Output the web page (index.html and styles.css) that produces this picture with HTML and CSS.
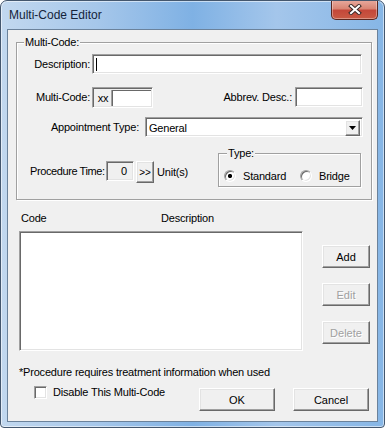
FILE: index.html
```html
<!DOCTYPE html>
<html lang="en">

<head>
    <meta charset="UTF-8">
    <meta name="viewport" content="width=device-width, initial-scale=1.0">
    <title>Multi-Code Editor</title>
    <link rel="stylesheet" href="styles.css">
</head>

<body>
    <div class="window">
        <div class="titlebar">
            <span class="title">Multi-Code Editor</span>
            <span class="close">
                <svg width="14" height="11" viewBox="0 0 14 11">
                    <path d="M3 2 L11 9 M11 2 L3 9" stroke="#3a2a28" stroke-width="4" stroke-linecap="square" />
                    <path d="M3 2 L11 9 M11 2 L3 9" stroke="#fff" stroke-width="2" stroke-linecap="square" />
                </svg>
            </span>
        </div>

        <div class="client">
            <div class="group main-group">
                <span class="legend">Multi-Code:</span>

                <div class="row row-desc">
                    <label class="lbl">Description:</label>
                    <div class="sunken edit-desc"><span class="caret"></span></div>
                </div>

                <div class="row row-code">
                    <label class="lbl">Multi-Code:</label>
                    <div class="sunken code-box">
                        <span class="prefix">xx</span>
                        <span class="code-input"></span>
                    </div>
                    <label class="lbl-abbrev">Abbrev. Desc.:</label>
                    <div class="sunken edit-abbrev"></div>
                </div>

                <div class="row row-appt">
                    <label class="lbl lbl-appt">Appointment Type:</label>
                    <div class="sunken combo">
                        <span class="combo-text">General</span>
                        <span class="raised combo-btn">
                            <svg width="7" height="4" viewBox="0 0 7 4"><path d="M0 0 H7 L3.5 4 Z" fill="#000" /></svg>
                        </span>
                    </div>
                </div>

                <div class="row row-time">
                    <label class="lbl-time">Procedure Time:</label>
                    <div class="sunken edit-time">0</div>
                    <button class="btn btn-more">&gt;&gt;</button>
                    <span class="units">Unit(s)</span>

                    <div class="group type-group">
                        <span class="legend">Type:</span>
                        <label class="radio radio-first"><span class="radio-dot checked"></span>Standard</label>
                        <label class="radio"><span class="radio-dot"></span>Bridge</label>
                    </div>
                </div>
            </div>

            <div class="list-head">
                <span class="col-code">Code</span>
                <span>Description</span>
            </div>

            <div class="list-area">
                <div class="sunken listbox"></div>
                <div class="list-buttons">
                    <button class="btn">Add</button>
                    <button class="btn disabled">Edit</button>
                    <button class="btn disabled">Delete</button>
                </div>
            </div>

            <div class="note">*Procedure requires treatment information when used</div>

            <div class="footer">
                <label class="check"><span class="check-box"></span>Disable This Multi-Code</label>
                <button class="btn btn-ok">OK</button>
                <button class="btn btn-cancel">Cancel</button>
            </div>
        </div>
    </div>
</body>

</html>
```

FILE: styles.css
```css
body {
    margin: 0;
    font-family: "Liberation Sans", Arial, sans-serif;
    font-size: 11px;
    letter-spacing: -0.2px;
    color: #000;
    background-color: #fff;
}

.window {
    width: 385px;
    height: 428px;
    box-sizing: border-box;
    border: 1px solid #44576e;
    border-radius: 7px 7px 4px 4px;
    background: linear-gradient(to right, #c2d8ef 0%, #a6c7ea 25%, #7fb1e4 50%, #a4c6eb 72%, #86b6e6 100%);
    box-shadow: inset 0 0 0 1px rgba(255, 255, 255, 0.55);
    overflow: hidden;
}

.titlebar {
    height: 28px;
    display: flex;
    align-items: flex-start;
}

.title {
    padding: 7px 0 0 8px;
    font-size: 12px;
    letter-spacing: 0;
    line-height: 14px;
    color: #14233a;
}

.close {
    margin: -1px 6px 0 auto;
    width: 47px;
    height: 20px;
    box-sizing: border-box;
    border: 1px solid #5a2720;
    border-top: none;
    border-radius: 0 0 5px 5px;
    background: linear-gradient(to bottom, #e8ab9f 0%, #d98574 45%, #c4483a 55%, #c95a44 100%);
    box-shadow: inset 0 0 0 1px rgba(255, 255, 255, 0.35);
    display: flex;
    justify-content: center;
    align-items: center;
}

.client {
    height: 393px;
    margin: 0 6px;
    box-sizing: border-box;
    border: 1px solid #6b829b;
    background-color: #f0f0f0;
}

/* classic 3D borders */
.sunken {
    box-sizing: border-box;
    border: 1px solid;
    border-color: #a0a0a0 #fff #fff #a0a0a0;
    box-shadow: inset 1px 1px 0 #696969, inset -1px -1px 0 #e3e3e3;
    background-color: #fff;
}

.raised,
.btn {
    box-sizing: border-box;
    border: 1px solid;
    border-color: #fff #696969 #696969 #fff;
    box-shadow: inset -1px -1px 0 #a0a0a0, inset 1px 1px 0 #e3e3e3;
    background-color: #f0f0f0;
}

.btn {
    padding: 0;
    font: inherit;
    color: #000;
    text-align: center;
}

.btn.disabled {
    color: #a0a0a0;
    text-shadow: 1px 1px 0 #fff;
}

.group {
    position: relative;
    box-sizing: border-box;
    border: 1px solid #a0a0a0;
    box-shadow: inset 1px 1px 0 #fff, 1px 1px 0 #fff;
}

.legend {
    position: absolute;
    top: -7px;
    left: 7px;
    padding: 0 1px;
    line-height: 13px;
    background-color: #f0f0f0;
}

.main-group {
    margin: 12px 0 0 8px;
    width: 356px;
    height: 158px;
}

.row {
    display: flex;
    align-items: flex-start;
}

.lbl {
    width: 73px;
    margin-right: 2px;
    text-align: right;
    white-space: nowrap;
}

.row-desc {
    margin-top: 11px;
    line-height: 20px;
}

.edit-desc {
    width: 270px;
    height: 20px;
    padding: 3px 0 0 3px;
}

.caret {
    display: block;
    width: 1px;
    height: 13px;
    background-color: #000;
}

.row-code {
    margin-top: 13px;
    line-height: 21px;
}

.code-box {
    width: 61px;
    height: 21px;
    padding: 2px 1px 1px 2px;
    display: flex;
    background-color: #f0f0f0;
}

.prefix {
    width: 16px;
    line-height: 17px;
    text-align: center;
}

.code-input {
    flex: 1;
    background-color: #fff;
    border-left: 1px solid #a0a0a0;
    box-shadow: inset 1px 1px 0 #696969;
}

.lbl-abbrev {
    margin-left: auto;
    margin-right: 3px;
    line-height: 20px;
}

.edit-abbrev {
    width: 68px;
    height: 20px;
    margin-right: 8px;
}

.row-appt {
    margin-top: 9px;
    line-height: 20px;
}

.lbl-appt {
    width: 122px;
    margin-right: 6px;
}

.combo {
    width: 218px;
    height: 20px;
    padding: 2px;
    display: flex;
}

.combo-text {
    flex: 1;
    padding-left: 1px;
    line-height: 16px;
}

.combo-btn {
    width: 15px;
    height: 16px;
    display: flex;
    justify-content: center;
    align-items: center;
}

.row-time {
    margin-top: 16px;
}

.lbl-time {
    width: 76px;
    margin: 8px 0 0 13px;
    line-height: 20px;
    letter-spacing: -0.4px;
    white-space: nowrap;
}

.edit-time {
    width: 28px;
    height: 20px;
    margin-top: 8px;
    padding-right: 6px;
    line-height: 18px;
    text-align: right;
    background-color: #f0f0f0;
}

.btn-more {
    width: 18px;
    height: 22px;
    margin: 8px 0 0 2px;
    font-size: 10px;
}

.units {
    margin: 8px 0 0 3px;
    line-height: 22px;
}

.type-group {
    width: 143px;
    height: 34px;
    margin: 0 10px 0 auto;
    padding: 12px 0 0 5px;
    display: flex;
    align-items: center;
}

.type-group .legend {
    left: 8px;
}

.radio {
    display: flex;
    align-items: center;
    line-height: 12px;
}

.radio-first {
    width: 76px;
}

.radio-dot {
    width: 12px;
    height: 12px;
    margin-right: 7px;
    box-sizing: border-box;
    border-radius: 50%;
    border: 1px solid;
    border-color: #a0a0a0 #fff #fff #a0a0a0;
    box-shadow: inset 1px 1px 0 #696969, inset -1px -1px 0 #e3e3e3;
    background-color: #fff;
}

.radio-dot.checked {
    background: radial-gradient(circle, #000 0, #000 1.8px, #fff 2.4px);
}

.list-head {
    margin: 12px 0 0 13px;
    line-height: 13px;
    display: flex;
}

.col-code {
    width: 140px;
}

.list-area {
    margin: 6px 0 0 11px;
    display: flex;
    align-items: flex-start;
}

.listbox {
    width: 284px;
    height: 120px;
}

.list-buttons {
    margin: 14px 0 0 19px;
    display: flex;
    flex-direction: column;
    gap: 15px;
}

.list-buttons .btn {
    width: 48px;
    height: 23px;
}

.note {
    margin: 15px 0 0 11px;
    line-height: 13px;
}

.footer {
    margin-top: 7px;
    padding-right: 8px;
    display: flex;
    align-items: flex-start;
}

.check {
    margin-left: 26px;
    display: flex;
    align-items: center;
    line-height: 13px;
}

.check-box {
    width: 13px;
    height: 13px;
    margin-right: 6px;
    box-sizing: border-box;
    border: 1px solid;
    border-color: #a0a0a0 #fff #fff #a0a0a0;
    box-shadow: inset 1px 1px 0 #696969, inset -1px -1px 0 #e3e3e3;
    background-color: #fff;
}

.btn-ok,
.btn-cancel {
    width: 76px;
    height: 23px;
    margin-top: 2px;
}

.btn-ok {
    margin-left: auto;
}

.btn-cancel {
    margin-left: 18px;
}
```
